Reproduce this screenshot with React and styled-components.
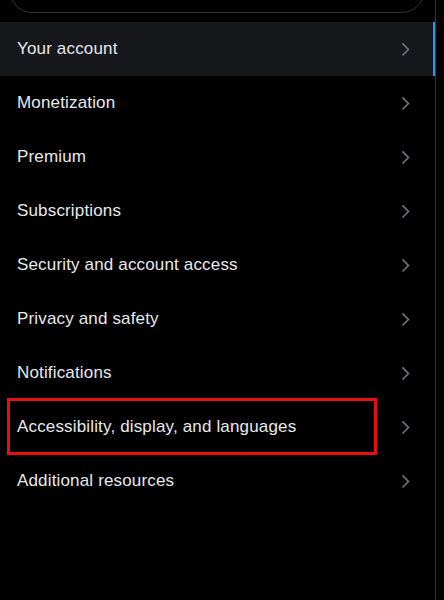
import React from "react";
import styled, { createGlobalStyle } from "styled-components";

const Global = createGlobalStyle`
  html, body { margin: 0; padding: 0; background: #000; }
  body { font-family: "Liberation Sans", Arial, sans-serif; -webkit-font-smoothing: antialiased; }
  * { box-sizing: border-box; }
`;

const Page = styled.div`
  width: 444px;
  height: 600px;
  background: #000;
  overflow: hidden;
`;

const Column = styled.div`
  width: 436px;
  height: 600px;
  border-right: 1px solid #2f3336;
  display: flex;
  flex-direction: column;
`;

const Header = styled.div`
  height: 22px;
  overflow: hidden;
  display: flex;
  align-items: flex-end;
  padding: 0 11px 9px 10px;
`;

const SearchBox = styled.div`
  flex: 1;
  height: 44px;
  flex-shrink: 0;
  border: 1px solid #333639;
  border-radius: 9999px;
`;

const List = styled.nav`
  display: flex;
  flex-direction: column;
`;

const Row = styled.div`
  position: relative;
  height: 54px;
  display: flex;
  align-items: center;
  justify-content: space-between;
  padding: 0 ${(p) => (p.$active ? "18px" : "20px")} 0 17px;
  background: ${(p) => (p.$active ? "#16181c" : "transparent")};
  border-right: ${(p) => (p.$active ? "2px solid #1d9bf0" : "none")};
`;

const Label = styled.span`
  color: #e7e9ea;
  font-size: 17px;
  line-height: 20px;
  font-weight: 400;
  letter-spacing: 0.16px;
`;

const Chevron = styled.svg`
  width: 18.75px;
  height: 18.75px;
  fill: #71767b;
  flex-shrink: 0;
`;

const Highlight = styled.div`
  position: absolute;
  top: -2px;
  left: 7px;
  width: 370px;
  height: 57px;
  border: 3px solid #e8100f;
  pointer-events: none;
`;

const items = [
  "Your account",
  "Monetization",
  "Premium",
  "Subscriptions",
  "Security and account access",
  "Privacy and safety",
  "Notifications",
  "Accessibility, display, and languages",
  "Additional resources",
];

export default function App() {
  return (
    <Page>
      <Global />
      <Column>
        <Header>
          <SearchBox />
        </Header>
        <List>
          {items.map((label, i) => (
            <Row key={label} $active={i === 0}>
              <Label>{label}</Label>
              <Chevron viewBox="0 0 24 24" aria-hidden="true">
                <path d="M14.586 12L7.543 4.96l1.414-1.42L17.414 12l-8.457 8.46-1.414-1.42L14.586 12z" />
              </Chevron>
              {i === 7 && <Highlight />}
            </Row>
          ))}
        </List>
      </Column>
    </Page>
  );
}
